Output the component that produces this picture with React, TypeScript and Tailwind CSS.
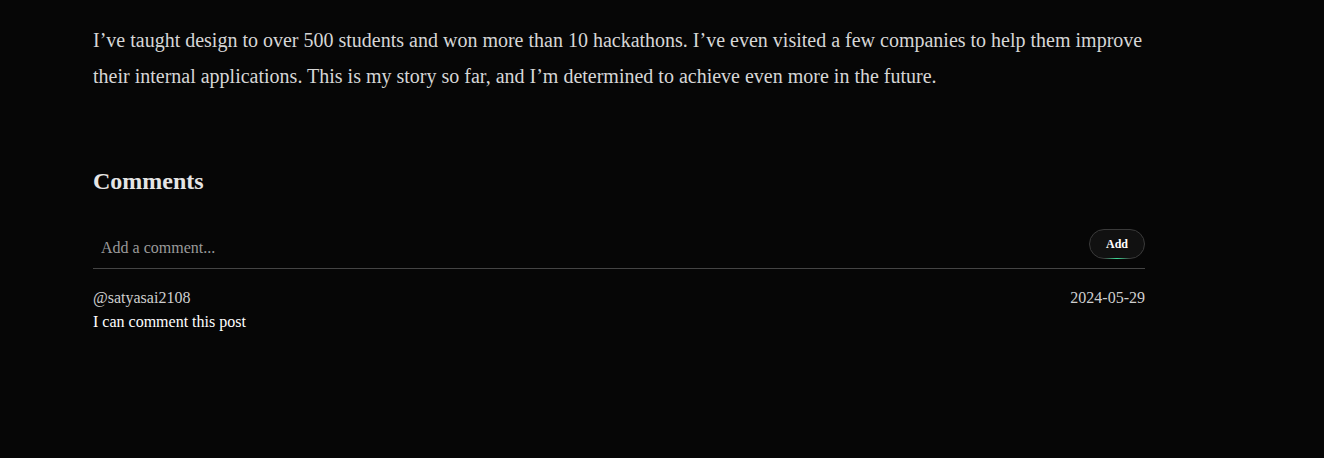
export default function App() {
  return (
    <div className="min-h-[458px] w-full bg-[#060606] font-['Liberation_Serif',serif]">
      <div className="w-[1052px] ml-[93px] pt-[22px]">
        <p className="text-[20px] leading-[36px] text-[#d6d6d6]">
          I’ve taught design to over 500 students and won more than 10 hackathons. I’ve even visited a few companies to help them improve their internal applications. This is my story so far, and I’m determined to achieve even more in the future.
        </p>
        <h2 className="mt-[72px] text-[24px] font-bold leading-[30px] text-[#e5e5e5]">Comments</h2>
        <div className="mt-[33px] flex h-[40px] items-start border-b border-[#444]">
          <input
            placeholder="Add a comment..."
            className="mt-[9px] h-[20px] flex-1 bg-transparent px-[8px] text-[16px] leading-[20px] text-[#ddd] placeholder-[#9a9a9a] outline-none"
          />
          <button className="relative h-[30px] w-[56px] rounded-full border border-[#3a3a3a] bg-[#111] text-[12px] font-bold text-white">
            Add
            <span className="absolute bottom-[-1px] left-1/2 h-[1px] w-[26px] -translate-x-1/2 bg-gradient-to-r from-transparent via-[#3ddc97] to-transparent" />
          </button>
        </div>
        <div className="mt-[18px] flex justify-between text-[16px] leading-[22px] text-[#cfcfcf]">
          <span>@satyasai2108</span>
          <span>2024-05-29</span>
        </div>
        <p className="mt-[1px] text-[16px] leading-[24px] text-white">I can comment this post</p>
      </div>
    </div>
  );
}
